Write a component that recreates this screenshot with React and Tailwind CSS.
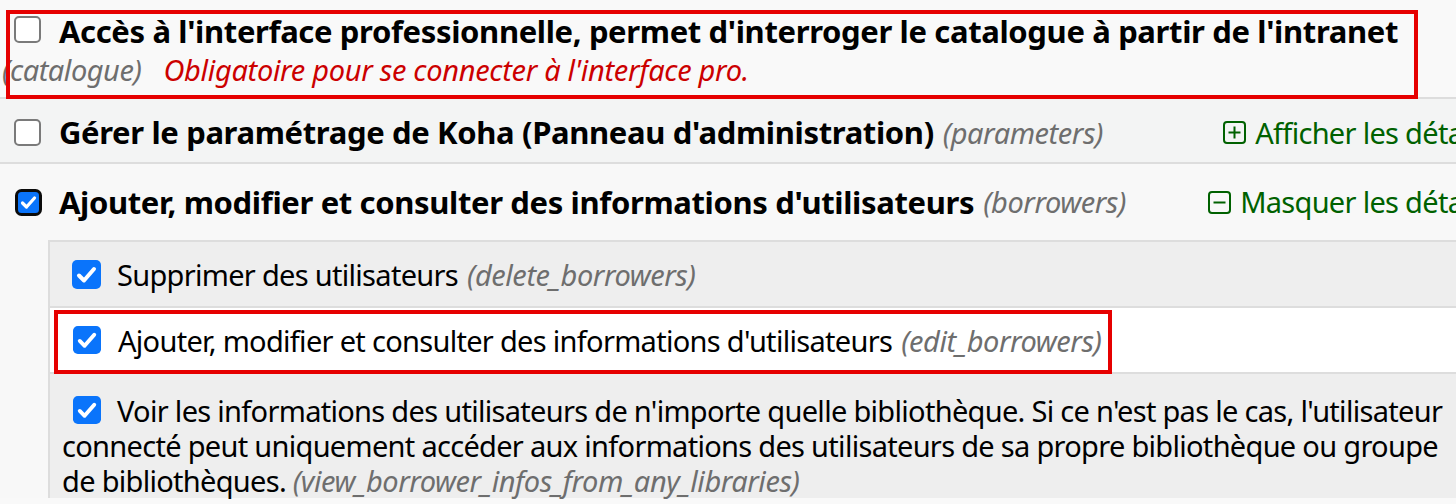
const Check = ({ size = 29 }) => (
  <svg width={size} height={size} viewBox="0 0 29 29" className="inline-block align-middle shrink-0">
    <rect x="0" y="0" width="29" height="29" rx="5" fill="#0a74fb" />
    <path d="M7 15.5 L12 20.5 L22 9" stroke="#fff" strokeWidth="4" fill="none" strokeLinecap="round" strokeLinejoin="round" />
  </svg>
)

const Empty = () => (
  <svg width="27" height="27" viewBox="0 0 27 27" className="inline-block align-middle shrink-0">
    <rect x="1" y="1" width="25" height="25" rx="4" fill="#fff" stroke="#7a7a7a" strokeWidth="2" />
  </svg>
)

const Focused = () => (
  <svg width="27" height="27" viewBox="0 0 27 27" className="inline-block align-middle shrink-0">
    <rect x="1.5" y="1.5" width="24" height="24" rx="5" fill="#0a74fb" stroke="#0b0b0b" strokeWidth="3" />
    <path d="M7.5 14 L11.5 18 L19.5 9" stroke="#fff" strokeWidth="3.2" fill="none" strokeLinecap="round" strokeLinejoin="round" />
  </svg>
)

const Toggle = ({ open }) => (
  <span className="inline-flex items-center gap-[9px] text-[#006100]">
    <svg width="23" height="23" viewBox="0 0 23 23" className="shrink-0">
      <rect x="1" y="1" width="21" height="21" rx="3" fill="none" stroke="#006100" strokeWidth="2" />
      <path d="M5.5 11.5 H17.5" stroke="#006100" strokeWidth="2" />
      {!open && <path d="M11.5 5.5 V17.5" stroke="#006100" strokeWidth="2" />}
    </svg>
    <span className="whitespace-nowrap">{open ? 'Masquer les détails' : 'Afficher les détails'}</span>
  </span>
)

const Code = ({ children }) => <span className="italic font-normal tracking-[-0.45px] text-[#6e6e6e]">{children}</span>

const Title = ({ children }) => <span className="font-bold text-[31px] tracking-[-0.36px]">{children}</span>

export default function App() {
  return (
    <div className="w-[1456px] h-[504px] overflow-hidden bg-[#f9f9f9] font-['Noto_Sans',sans-serif] text-black tracking-[-0.7px]">
      <div className="w-[1496px]">
        {/* catalogue */}
        <div className="relative pl-[2px] pt-[12px] pb-[8px] text-[29px] leading-[38px] border-b-2 border-[#dddddd] bg-[#f9f9f9]">
          <span className="inline-block ml-[12px] mr-[18px] -translate-y-[6px]"><Empty /></span>
          <Title>Accès à l'interface professionnelle, permet d'interroger le catalogue à partir de l'intranet</Title>
          <br />
          <Code>(catalogue)</Code>
          <span className="ml-[22px] italic tracking-[-0.3px] text-[#cc0000]">Obligatoire pour se connecter à l'interface pro.</span>
          <div className="absolute left-[6px] top-[10px] w-[1412px] h-[89px] border-4 border-[#e60000]" />
        </div>

        {/* parameters */}
        <div className="flex items-center justify-between h-[65px] pt-[4px] pl-[14px] pr-[6px] border-b-2 border-[#dddddd] bg-[#f3f4f4] text-[29px]">
          <div className="flex items-center">
            <Empty />
            <span className="ml-[18px]"><Title>Gérer le paramétrage de Koha (Panneau d'administration)</Title></span>
            <span className="ml-[9px]"><Code>(parameters)</Code></span>
          </div>
          <Toggle />
        </div>

        {/* borrowers */}
        <div className="bg-[#f8f8f8] text-[29px]">
          <div className="flex items-center justify-between h-[76px] pl-[15px] pr-[6px]">
            <div className="flex items-center">
              <Focused />
              <span className="ml-[17px]"><Title>Ajouter, modifier et consulter des informations d'utilisateurs</Title></span>
              <span className="ml-[9px]"><Code>(borrowers)</Code></span>
            </div>
            <Toggle open />
          </div>

          <div className="ml-[48px] border-l-2 border-t-2 border-[#dddddd] bg-[#eeeeee] leading-[35px]">
            <div className="flex items-center h-[66px] pl-[22px] border-b-2 border-[#dddddd]">
              <Check />
              <span className="ml-[16px]">Supprimer des utilisateurs</span>
              <span className="ml-[9px]"><Code>(delete_borrowers)</Code></span>
            </div>

            <div className="relative flex items-center h-[66px] pl-[23px] border-b-2 border-[#dddddd] bg-white">
              <Check size={28} />
              <span className="ml-[17px]">Ajouter, modifier et consulter des informations d'utilisateurs</span>
              <span className="ml-[9px]"><Code>(edit_borrowers)</Code></span>
              <div className="absolute left-[4px] top-[2px] w-[1058px] h-[64px] border-4 border-[#e60000]" />
            </div>

            <div className="pl-[12px] pt-[19px] w-[1400px]">
              <span className="inline-block ml-[11px] mr-[16px] -translate-y-[4px]"><Check size={28} /></span>
              Voir les informations des utilisateurs de n'importe quelle bibliothèque. Si ce n'est pas le cas, l'utilisateur connecté peut uniquement accéder aux informations des utilisateurs de sa propre bibliothèque ou groupe de bibliothèques. <Code>(view_borrower_infos_from_any_libraries)</Code>
            </div>
          </div>
        </div>
      </div>
    </div>
  )
}
